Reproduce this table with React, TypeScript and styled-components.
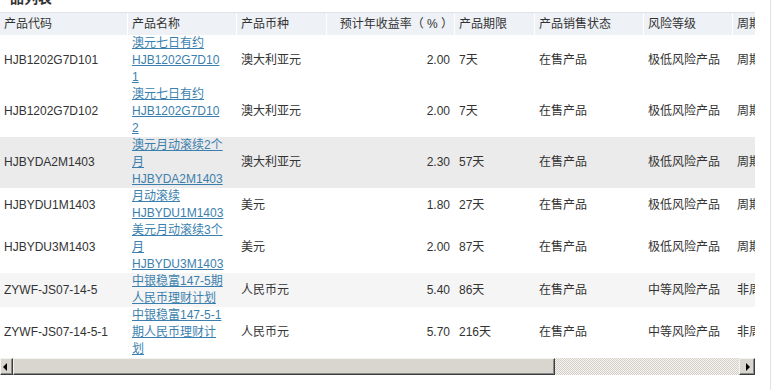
import React from "react";
import styled, { createGlobalStyle } from "styled-components";

const GlobalStyle = createGlobalStyle`
  html, body { margin: 0; padding: 0; background: #fff; }
  body {
    font-family: "Liberation Sans", "Noto Sans CJK SC", sans-serif;
    font-size: 12px;
    color: #333;
  }
`;

const Page = styled.div`
  display: flex;
  width: 780px;
  height: 390px;
  overflow: hidden;
  background: #fff;
`;

const Main = styled.div`
  width: 755px;
  display: flex;
  flex-direction: column;
`;

const SideRule = styled.div`
  margin-left: 15px;
  width: 1px;
  height: 390px;
  background: #e2e2e2;
`;

const Title = styled.h2`
  margin: -10px 0 0 0;
  padding-left: 10px;
  height: 16px;
  font-size: 14px;
  line-height: 16px;
  font-weight: bold;
  color: #333;
`;

const Viewport = styled.div`
  margin-top: 6px;
  width: 755px;
  overflow: hidden;
`;

const Table = styled.table`
  width: 1011px;
  table-layout: fixed;
  border-collapse: separate;
  border-spacing: 0;
  font-size: 12px;
  line-height: 17px;
`;

const HeadRow = styled.tr`
  background: #eef1f5;
`;

const Th = styled.th<{ $align?: "left" | "right"; $padR?: number }>`
  border-top: 1px solid #dfe2e6;
  box-shadow: inset -1px 0 0 #fff;
  padding: 3px ${(p) => p.$padR ?? 4}px 2px 4px;
  font-weight: normal;
  text-align: ${(p) => p.$align ?? "left"};
  white-space: nowrap;
  overflow: hidden;
  color: #333;
`;

const Row = styled.tr<{ $tone?: "plain" | "hover" | "soft" }>`
  background: ${(p) =>
    p.$tone === "hover" ? "#ebebeb" : p.$tone === "soft" ? "#f5f5f5" : "#fff"};
`;

const Td = styled.td<{ $align?: "left" | "right"; $padR?: number }>`
  padding: 0 ${(p) => p.$padR ?? 4}px 0 4px;
  vertical-align: middle;
  text-align: ${(p) => p.$align ?? "left"};
  overflow: hidden;
  white-space: nowrap;
  color: #333;
`;

const NameTd = styled.td`
  padding: 0 13px 0 4px;
  vertical-align: middle;
  overflow-wrap: anywhere;
`;

const Link = styled.a`
  color: #3b7fae;
  text-decoration: underline;
  cursor: pointer;
`;

const ScrollBar = styled.div`
  display: flex;
  height: 17px;
  width: 755px;
`;

const ArrowButton = styled.div<{ $w: number }>`
  box-sizing: border-box;
  flex: 0 0 ${(p) => p.$w}px;
  display: flex;
  align-items: center;
  justify-content: center;
  background: #d9d6d0;
  border-top: 1px solid #f4f3f1;
  border-left: 1px solid #f4f3f1;
  border-right: 1px solid #3c3c3c;
  border-bottom: 1px solid #3c3c3c;
  box-shadow: inset -1px -1px 0 #8a8a8a;
`;

const Triangle = styled.span<{ $dir: "left" | "right" }>`
  width: 0;
  height: 0;
  border-top: 4px solid transparent;
  border-bottom: 4px solid transparent;
  ${(p) =>
    p.$dir === "left"
      ? "border-right: 4px solid #000; margin-right: 3px;"
      : "border-left: 4px solid #000; margin-left: 2px;"}
`;

const Thumb = styled.div`
  box-sizing: border-box;
  flex: 0 0 auto;
  background: #d9d6d0;
  border-top: 1px solid #f4f3f1;
  border-left: 1px solid #f4f3f1;
  border-right: 1px solid #3c3c3c;
  border-bottom: 1px solid #3c3c3c;
  box-shadow: inset -1px -1px 0 #8a8a8a;
`;

const Track = styled.div`
  flex: 1 1 auto;
  background-color: #fff;
  background-image: repeating-conic-gradient(#d4d0c8 0% 25%, #f4f3f1 0% 50%);
  background-size: 2px 2px;
`;

type Product = {
  code: string;
  name: string;
  currency: string;
  rate: string;
  term: string;
  status: string;
  risk: string;
  cycle: string;
  tone?: "plain" | "hover" | "soft";
};

const products: Product[] = [
  { code: "HJB1202G7D101", name: "澳元七日有约HJB1202G7D101", currency: "澳大利亚元", rate: "2.00", term: "7天", status: "在售产品", risk: "极低风险产品", cycle: "周期型产品" },
  { code: "HJB1202G7D102", name: "澳元七日有约HJB1202G7D102", currency: "澳大利亚元", rate: "2.00", term: "7天", status: "在售产品", risk: "极低风险产品", cycle: "周期型产品" },
  { code: "HJBYDA2M1403", name: "澳元月动滚续2个月HJBYDA2M1403", currency: "澳大利亚元", rate: "2.30", term: "57天", status: "在售产品", risk: "极低风险产品", cycle: "周期型产品", tone: "hover" },
  { code: "HJBYDU1M1403", name: "月动滚续HJBYDU1M1403", currency: "美元", rate: "1.80", term: "27天", status: "在售产品", risk: "极低风险产品", cycle: "周期型产品" },
  { code: "HJBYDU3M1403", name: "美元月动滚续3个月HJBYDU3M1403", currency: "美元", rate: "2.00", term: "87天", status: "在售产品", risk: "极低风险产品", cycle: "周期型产品" },
  { code: "ZYWF-JS07-14-5", name: "中银稳富147-5期人民币理财计划", currency: "人民币元", rate: "5.40", term: "86天", status: "在售产品", risk: "中等风险产品", cycle: "非周期型产品", tone: "soft" },
  { code: "ZYWF-JS07-14-5-1", name: "中银稳富147-5-1期人民币理财计划", currency: "人民币元", rate: "5.70", term: "216天", status: "在售产品", risk: "中等风险产品", cycle: "非周期型产品" },
];

const colWidths = [128, 109, 90, 128, 80, 109, 89, 278];
const viewportWidth = 755;
const tableWidth = 1011;
const startBtn = 13;
const endBtn = 16;

export default function App() {
  const trackLen = viewportWidth - startBtn - endBtn;
  const thumbWidth = Math.round((trackLen * viewportWidth) / tableWidth);

  return (
    <>
      <GlobalStyle />
      <Page>
        <Main>
          <Title>品列表</Title>
          <Viewport>
            <Table>
              <colgroup>
                {colWidths.map((w, i) => (
                  <col key={i} style={{ width: w }} />
                ))}
              </colgroup>
              <thead>
                <HeadRow>
                  <Th>产品代码</Th>
                  <Th>产品名称</Th>
                  <Th>产品币种</Th>
                  <Th $align="right" $padR={2}>预计年收益率（ % ）</Th>
                  <Th>产品期限</Th>
                  <Th>产品销售状态</Th>
                  <Th>风险等级</Th>
                  <Th>周期类型</Th>
                </HeadRow>
              </thead>
              <tbody>
                {products.map((p) => (
                  <Row key={p.code} $tone={p.tone}>
                    <Td>{p.code}</Td>
                    <NameTd>
                      <Link>{p.name}</Link>
                    </NameTd>
                    <Td>{p.currency}</Td>
                    <Td $align="right" $padR={5}>{p.rate}</Td>
                    <Td>{p.term}</Td>
                    <Td>{p.status}</Td>
                    <Td>{p.risk}</Td>
                    <Td>{p.cycle}</Td>
                  </Row>
                ))}
              </tbody>
            </Table>
          </Viewport>
          <ScrollBar>
            <ArrowButton $w={startBtn}>
              <Triangle $dir="left" />
            </ArrowButton>
            <Thumb style={{ width: thumbWidth }} />
            <Track />
            <ArrowButton $w={endBtn}>
              <Triangle $dir="right" />
            </ArrowButton>
          </ScrollBar>
        </Main>
        <SideRule />
      </Page>
    </>
  );
}
